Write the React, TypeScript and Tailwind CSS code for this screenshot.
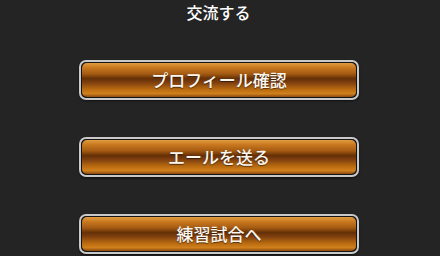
import React from 'react';

const actions = ['プロフィール確認', 'エールを送る', '練習試合へ'];

const GoldButton = ({ label }: { label: string }) => (
  <button className="block w-[280px] rounded-[7px] border-2 border-[#c9c9c9] bg-[#151515] p-px shadow-[0_1px_2px_rgba(0,0,0,0.6)]">
    <div className="flex h-[34px] items-center justify-center rounded-[5px] bg-[linear-gradient(to_bottom,#e29c3e_0%,#c8781f_14%,#a45a12_32%,#643006_46%,#804010_58%,#b6680f_76%,#d0801c_90%,#8a4a10_100%)] text-[17px] font-medium text-[#fbf6ee] [text-shadow:0_1px_1px_rgba(0,0,0,0.5)]">
      {label}
    </div>
  </button>
);

export default function App() {
  return (
    <div className="h-[256px] w-[440px] overflow-hidden bg-[#242424] font-['Noto_Sans_CJK_JP','Noto_Sans',sans-serif]">
      <div className="flex h-[24px] items-center justify-center pr-[3px] text-[16px] font-medium text-white">
        交流する
      </div>
      <div className="flex flex-col items-center gap-[37px] pt-[36px] pr-[2px]">
        {actions.map((a) => (
          <GoldButton key={a} label={a} />
        ))}
      </div>
    </div>
  );
}
